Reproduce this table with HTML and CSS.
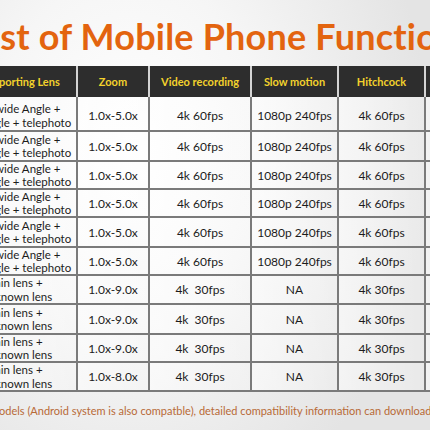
FILE: index.html
```html
<!DOCTYPE html>
<html>
<head>
<meta charset="utf-8">
<link rel="stylesheet" href="styles.css">
</head>
<body>
<div class="page">
  <h1 class="title">List of Mobile Phone Functions</h1>
  <div class="table">
    <div class="th lens">porting Lens</div>
    <div class="th">Zoom</div>
    <div class="th">Video recording</div>
    <div class="th">Slow motion</div>
    <div class="th">Hitchcock</div>
    <div class="th"></div>

    <div class="td lens first"><span>wide Angle +<br>gle + telephoto</span></div>
    <div class="td first">1.0x-5.0x</div><div class="td first">4k 60fps</div><div class="td first">1080p 240fps</div><div class="td first">4k 60fps</div><div class="td first"></div>

    <div class="td lens"><span>wide Angle +<br>gle + telephoto</span></div>
    <div class="td">1.0x-5.0x</div><div class="td">4k 60fps</div><div class="td">1080p 240fps</div><div class="td">4k 60fps</div><div class="td"></div>

    <div class="td lens"><span>wide Angle +<br>gle + telephoto</span></div>
    <div class="td">1.0x-5.0x</div><div class="td">4k 60fps</div><div class="td">1080p 240fps</div><div class="td">4k 60fps</div><div class="td"></div>

    <div class="td lens"><span>wide Angle +<br>gle + telephoto</span></div>
    <div class="td">1.0x-5.0x</div><div class="td">4k 60fps</div><div class="td">1080p 240fps</div><div class="td">4k 60fps</div><div class="td"></div>

    <div class="td lens"><span>wide Angle +<br>gle + telephoto</span></div>
    <div class="td">1.0x-5.0x</div><div class="td">4k 60fps</div><div class="td">1080p 240fps</div><div class="td">4k 60fps</div><div class="td"></div>

    <div class="td lens"><span>wide Angle +<br>gle + telephoto</span></div>
    <div class="td">1.0x-5.0x</div><div class="td">4k 60fps</div><div class="td">1080p 240fps</div><div class="td">4k 60fps</div><div class="td"></div>

    <div class="td lens"><span>ain lens +<br>known lens</span></div>
    <div class="td">1.0x-9.0x</div><div class="td">4k  30fps</div><div class="td">NA</div><div class="td">4k 30fps</div><div class="td"></div>

    <div class="td lens"><span>ain lens +<br>known lens</span></div>
    <div class="td">1.0x-9.0x</div><div class="td">4k  30fps</div><div class="td">NA</div><div class="td">4k 30fps</div><div class="td"></div>

    <div class="td lens"><span>ain lens +<br>known lens</span></div>
    <div class="td">1.0x-9.0x</div><div class="td">4k  30fps</div><div class="td">NA</div><div class="td">4k 30fps</div><div class="td"></div>

    <div class="td lens"><span>ain lens +<br>known lens</span></div>
    <div class="td">1.0x-8.0x</div><div class="td">4k  30fps</div><div class="td">NA</div><div class="td">4k 30fps</div><div class="td"></div>
  </div>
  <p class="note">models (Android system is also compatble), detailed compatibility information can download the file</p>
</div>
</body>
</html>
```
FILE: styles.css
```css
html, body {
  margin: 0;
  padding: 0;
}
body {
  width: 430px;
  height: 430px;
  overflow: hidden;
  font-family: Lato, "Open Sans", sans-serif;
  background: radial-gradient(ellipse 70% 90% at 30% 35%, #ffffff 0%, #f6f6f6 45%, #e4e4e4 100%);
}
.page {
  width: 430px;
  height: 430px;
  overflow: hidden;
}
.title {
  margin: 15px 0 0 -28px;
  font-size: 36px;
  line-height: 42px;
  font-weight: 700;
  letter-spacing: 0.2px;
  color: #e3640f;
  white-space: nowrap;
}
.table {
  margin-top: 9px;
  width: 506px;
  display: grid;
  grid-template-columns: 78px 72px 102px 87px 87px 80px;
  grid-template-rows: 31px 35px 30px 28px 28px 30px 28px 29px 30px 28px 29px;
}
.th {
  background: #2d2d2d;
  color: #f3d22c;
  font-weight: 700;
  font-size: 11px;
  display: flex;
  align-items: center;
  justify-content: center;
  border-right: 2px solid #d4d4d4;
  white-space: nowrap;
}
.th.lens {
  justify-content: flex-start;
  margin-left: -1px;
}
.td {
  display: flex;
  align-items: center;
  justify-content: center;
  font-size: 12px;
  color: #1c1c1c;
  white-space: pre;
  border-right: 2px solid #7a7a7a;
  border-bottom: 2px solid #7a7a7a;
  background: linear-gradient(90deg, rgba(255,255,255,0.55), rgba(255,255,255,0.2));
}
.td.first {
  padding-top: 4px;
}
.td.lens {
  justify-content: flex-start;
  font-size: 11.5px;
  line-height: 13.5px;
  overflow: hidden;
}
.td.lens span {
  margin-left: -5px;
}
.note {
  margin: 11px 0 0 -10px;
  font-size: 11px;
  line-height: 16px;
  color: #b86a37;
  white-space: nowrap;
}
```
